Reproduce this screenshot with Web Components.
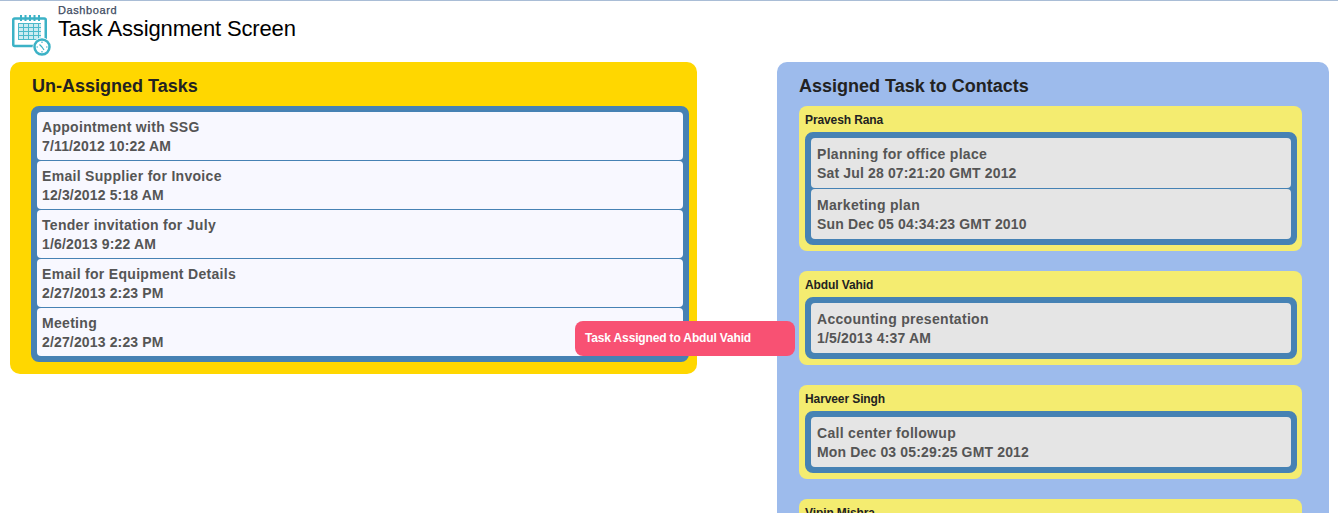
<!DOCTYPE html>
<html>
<head>
<meta charset="utf-8">
<title>Task Assignment Screen</title>
<style>
html,body {height:100%;}
body {margin:0;overflow:hidden;background:#fff;font-family:"Liberation Sans",Arial,sans-serif;border-top:1px solid #a9bdd6;box-sizing:border-box;}
</style>
</head>
<body>
<task-screen>
    <page-header slot="header" crumb="Dashboard" title="Task Assignment Screen"></page-header>
    <task-panel slot="left" heading="Un-Assigned Tasks" tone="unassigned">
        <task-list>
            <task-item name="Appointment with SSG" when="7/11/2012 10:22 AM"></task-item>
            <task-item name="Email Supplier for Invoice" when="12/3/2012 5:18 AM"></task-item>
            <task-item name="Tender invitation for July" when="1/6/2013 9:22 AM"></task-item>
            <task-item name="Email for Equipment Details" when="2/27/2013 2:23 PM"></task-item>
            <task-item name="Meeting" when="2/27/2013 2:23 PM"></task-item>
        </task-list>
    </task-panel>
    <task-panel slot="right" heading="Assigned Task to Contacts" tone="assigned">
        <contact-card name="Pravesh Rana">
            <task-list>
                <task-item grey name="Planning for office place" when="Sat Jul 28 07:21:20 GMT 2012"></task-item>
                <task-item grey name="Marketing plan" when="Sun Dec 05 04:34:23 GMT 2010"></task-item>
            </task-list>
        </contact-card>
        <contact-card name="Abdul Vahid">
            <task-list>
                <task-item grey name="Accounting presentation" when="1/5/2013 4:37 AM"></task-item>
            </task-list>
        </contact-card>
        <contact-card name="Harveer Singh">
            <task-list>
                <task-item grey name="Call center followup" when="Mon Dec 03 05:29:25 GMT 2012"></task-item>
            </task-list>
        </contact-card>
        <contact-card name="Vipin Mishra"></contact-card>
    </task-panel>
    <toast-note slot="toast">Task Assigned to Abdul Vahid</toast-note>
</task-screen>
<script>
customElements.define('task-screen', class extends HTMLElement {
    constructor() {
        super();
        this.attachShadow({ mode: 'open' }).innerHTML = `
        <style>
        :host {display:block;position:relative;height:512px;overflow:hidden;}
        .columns {display:flex;justify-content:space-between;align-items:flex-start;padding:0 9px 0 10px;}
        </style>
        <slot name=header></slot>
        <div class=columns>
            <slot name=left></slot>
            <slot name=right></slot>
        </div>
        <slot name=toast></slot>`;
    }
});
customElements.define('page-header', class extends HTMLElement {
    constructor() {
        super();
        this.attachShadow({ mode: 'open' }).innerHTML = `
        <style>
        :host {display:flex;height:61px;box-sizing:border-box;padding:3px 0 0 12px;gap:6px;}
        svg {margin-top:10px;flex:none;}
        .crumb {font-size:11px;line-height:12px;color:#3c4a60;letter-spacing:.6px;-webkit-text-stroke:.25px #3c4a60;}
        h1 {margin:0;font-size:22px;line-height:26px;font-weight:400;color:#000;letter-spacing:-.14px;}
        </style>
        <svg width="40" height="43" viewBox="0 0 40 43" fill="none">
            <rect x="1.250" y="4.500" width="32.500" height="27.500" rx="1.500" stroke="#3cb2c6" stroke-width="2.500"/>
            <path d="M9 1v6M13.500 1v6M18 1v6M22.500 1v6M27 1v6" stroke="#3cb2c6" stroke-width="2"/>
            <rect x="6" y="9" width="23" height="17" fill="#cdecf1"/>
            <path d="M6 9.500h23M6 13.500h23M6 17.500h23M6 21.500h23M6 25.500h23M6.500 9v17M11.500 9v17M16.500 9v17M21.500 9v17M26.500 9v17" stroke="#4dbacb" stroke-width="1"/>
            <circle cx="30" cy="33" r="9.500" fill="#fff"/>
            <circle cx="30" cy="33" r="7.500" fill="#fff" stroke="#3cb2c6" stroke-width="2.500"/>
            <path d="M30 27.500v1.500M30 37v1.500M24.500 33h1.500M34 33h1.500M30 33l-2.500-2.500M30 33l2 3" stroke="#3cb2c6" stroke-width="1.200"/>
        </svg>
        <div>
            <div class=crumb></div>
            <h1></h1>
        </div>`;
    }
    connectedCallback() {
        this.shadowRoot.querySelector('.crumb').textContent = this.getAttribute('crumb');
        this.shadowRoot.querySelector('h1').textContent = this.getAttribute('title');
    }
});
customElements.define('task-panel', class extends HTMLElement {
    constructor() {
        super();
        this.attachShadow({ mode: 'open' }).innerHTML = `
        <style>
        :host {display:block;box-sizing:border-box;border-radius:10px;}
        :host([tone=unassigned]) {width:687px;background:#ffd700;padding:0 8px 12px 21px;}
        :host([tone=assigned]) {width:552px;background:#9dbbec;padding:0 27px 0 22px;height:460px;overflow:hidden;}
        h2 {margin:0;font-size:18px;line-height:22px;padding:13px 0 9px 1px;font-weight:700;color:#222;}
        :host([tone=assigned]) h2 {padding-left:0;}
        </style>
        <h2></h2>
        <slot></slot>`;
    }
    connectedCallback() {
        this.shadowRoot.querySelector('h2').textContent = this.getAttribute('heading');
    }
});
customElements.define('task-list', class extends HTMLElement {
    constructor() {
        super();
        this.attachShadow({ mode: 'open' }).innerHTML = `
        <style>
        :host {display:flex;flex-direction:column;gap:1px;background:#4682b4;border:6px solid #4682b4;border-radius:8px;}
        </style>
        <slot></slot>`;
    }
});
customElements.define('task-item', class extends HTMLElement {
    constructor() {
        super();
        this.attachShadow({ mode: 'open' }).innerHTML = `
        <style>
        :host {display:block;box-sizing:border-box;height:48px;padding:6px 5px 0;background:#f8f8ff;border-radius:4px;color:#555;font-size:14px;line-height:19px;font-weight:700;}
        :host([grey]) {background:#e5e5e5;height:50px;padding:7px 6px 0;}
        .name {letter-spacing:.3px;}
        .when {letter-spacing:.15px;}
        </style>
        <div class=name></div>
        <div class=when></div>`;
    }
    connectedCallback() {
        this.shadowRoot.querySelector('.name').textContent = this.getAttribute('name');
        this.shadowRoot.querySelector('.when').textContent = this.getAttribute('when');
    }
});
customElements.define('contact-card', class extends HTMLElement {
    constructor() {
        super();
        this.attachShadow({ mode: 'open' }).innerHTML = `
        <style>
        :host {display:block;background:#f4ec70;border-radius:8px;padding:6px 5px 6px 6px;margin-bottom:20px;}
        .name {font-size:12px;line-height:16px;font-weight:700;color:#222;margin-bottom:4px;letter-spacing:-.1px;}
        </style>
        <div class=name></div>
        <slot></slot>`;
    }
    connectedCallback() {
        this.shadowRoot.querySelector('.name').textContent = this.getAttribute('name');
    }
});
customElements.define('toast-note', class extends HTMLElement {
    constructor() {
        super();
        this.attachShadow({ mode: 'open' }).innerHTML = `
        <style>
        :host {position:absolute;left:575px;top:320px;width:220px;height:35px;box-sizing:border-box;padding:0 10px;border-radius:8px;background:#f85173;color:#fff;font-size:12px;line-height:34px;font-weight:700;letter-spacing:-.15px;}
        </style>
        <slot></slot>`;
    }
});
</script>
</body>
</html>
